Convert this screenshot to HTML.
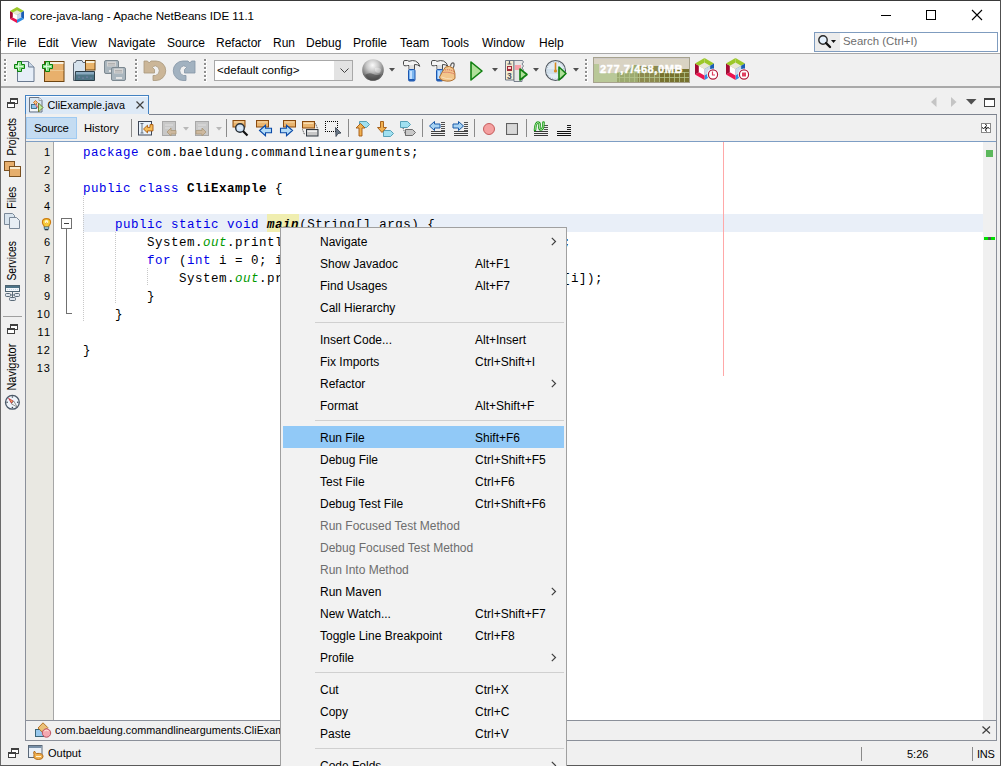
<!DOCTYPE html>
<html><head><meta charset="utf-8">
<style>
*{margin:0;padding:0;box-sizing:border-box}
html,body{width:1001px;height:766px;overflow:hidden;background:#f0f0f0;font-family:"Liberation Sans",sans-serif;font-size:12px;color:#000;position:relative}
.a{position:absolute}
.t{position:absolute;white-space:nowrap;line-height:14px;font-size:12px}
.c{position:absolute;white-space:pre;font-family:"Liberation Mono",monospace;font-size:12.5px;letter-spacing:0.5px;line-height:18px;color:#000}
.k{color:#0000e6}
.o{color:#009900;font-style:italic}
.s{color:#ce7b00}
svg{position:absolute;overflow:visible}
</style></head><body>

<div class="a" style="left:0;top:0;width:1001px;height:53px;background:#fff"></div>
<div class="a" style="left:0;top:53px;width:1001px;height:1px;background:#a8a8a8"></div>
<div class="a" style="left:0;top:86px;width:1001px;height:2px;background:#a9a9a9"></div>
<svg style="left:10px;top:7px" width="14" height="16"><polygon points="7.0,8.0 7.0,0 14,4.0" fill="#9cc82a"/><polygon points="7.0,8.0 14,4.0 14,12.0" fill="#1a5cb4"/><polygon points="7.0,8.0 14,12.0 7.0,16" fill="#2c8ce4"/><polygon points="7.0,8.0 7.0,16 0,12.0" fill="#ec1450"/><polygon points="7.0,8.0 0,12.0 0,4.0" fill="#a40a34"/><polygon points="7.0,8.0 0,4.0 7.0,0" fill="#9cc82a"/><polygon points="2.80,5.60 7.00,3.20 11.20,5.60 7.00,8.00" fill="#e8e8d6"/><polygon points="2.80,5.60 7.00,8.00 7.00,12.80 2.80,10.40" fill="#ffffff"/><polygon points="7.00,8.00 11.20,5.60 11.20,10.40 7.00,12.80" fill="#c9d9e9"/></svg>
<div class="t" style="left:30px;top:9.17px;font-size:11.6px;">core-java-lang - Apache NetBeans IDE 11.1</div>
<div class="a" style="left:881px;top:15px;width:10px;height:1px;background:#000"></div>
<div class="a" style="left:926px;top:10px;width:10px;height:10px;border:1px solid #000"></div>
<svg style="left:972px;top:10px" width="10" height="10"><path d="M0,0L10,10M10,0L0,10" stroke="#000" stroke-width="1.1"/></svg>
<div class="t" style="left:7px;top:36.03px;font-size:12px;">File</div>
<div class="t" style="left:38px;top:36.03px;font-size:12px;">Edit</div>
<div class="t" style="left:71px;top:36.03px;font-size:12px;">View</div>
<div class="t" style="left:108px;top:36.03px;font-size:12px;">Navigate</div>
<div class="t" style="left:167px;top:36.03px;font-size:12px;">Source</div>
<div class="t" style="left:216px;top:36.03px;font-size:12px;">Refactor</div>
<div class="t" style="left:273px;top:36.03px;font-size:12px;">Run</div>
<div class="t" style="left:306px;top:36.03px;font-size:12px;">Debug</div>
<div class="t" style="left:353px;top:36.03px;font-size:12px;">Profile</div>
<div class="t" style="left:400px;top:36.03px;font-size:12px;">Team</div>
<div class="t" style="left:441px;top:36.03px;font-size:12px;">Tools</div>
<div class="t" style="left:482px;top:36.03px;font-size:12px;">Window</div>
<div class="t" style="left:539px;top:36.03px;font-size:12px;">Help</div>
<div class="a" style="left:814px;top:32px;width:184px;height:20px;border:1px solid #7f9cbf;background:#fff"></div>
<div class="a" style="left:815px;top:33px;width:25px;height:18px;background:#ececec"></div>
<svg style="left:818px;top:35px" width="20" height="15"><circle cx="5" cy="5" r="4.2" fill="#e4f0fc" stroke="#2a2a2a" stroke-width="1.4"/><path d="M8,8L12,12" stroke="#111" stroke-width="2.4" stroke-linecap="round"/><path d="M13,5h5l-2.5,3z" fill="#111"/></svg>
<div class="t" style="left:843px;top:34.23px;font-size:11.4px;color:#6d6d6d">Search (Ctrl+I)</div>
<div class="a" style="left:0;top:0;width:1001px;height:1px;background:#3a3a3a"></div>
<div class="a" style="left:0;top:0;width:1px;height:766px;background:#6a6a6a"></div>
<div class="a" style="left:1000px;top:0;width:1px;height:766px;background:#505050"></div>
<div class="a" style="left:0;top:0;width:1px;height:41px;background:#383838"></div>
<div class="a" style="left:0;top:765px;width:1001px;height:1px;background:#5a5a5a"></div>
<div class="a" style="left:4px;top:59px;width:2px;height:2px;background:#8e8e8e;border-right:1px solid #fff;border-bottom:1px solid #fff;box-sizing:content-box;width:2px;height:2px"></div><div class="a" style="left:4px;top:63px;width:2px;height:2px;background:#8e8e8e;border-right:1px solid #fff;border-bottom:1px solid #fff;box-sizing:content-box;width:2px;height:2px"></div><div class="a" style="left:4px;top:67px;width:2px;height:2px;background:#8e8e8e;border-right:1px solid #fff;border-bottom:1px solid #fff;box-sizing:content-box;width:2px;height:2px"></div><div class="a" style="left:4px;top:71px;width:2px;height:2px;background:#8e8e8e;border-right:1px solid #fff;border-bottom:1px solid #fff;box-sizing:content-box;width:2px;height:2px"></div><div class="a" style="left:4px;top:75px;width:2px;height:2px;background:#8e8e8e;border-right:1px solid #fff;border-bottom:1px solid #fff;box-sizing:content-box;width:2px;height:2px"></div><div class="a" style="left:4px;top:79px;width:2px;height:2px;background:#8e8e8e;border-right:1px solid #fff;border-bottom:1px solid #fff;box-sizing:content-box;width:2px;height:2px"></div>
<div class="a" style="left:135px;top:59px;width:2px;height:2px;background:#8e8e8e;border-right:1px solid #fff;border-bottom:1px solid #fff;box-sizing:content-box;width:2px;height:2px"></div><div class="a" style="left:135px;top:63px;width:2px;height:2px;background:#8e8e8e;border-right:1px solid #fff;border-bottom:1px solid #fff;box-sizing:content-box;width:2px;height:2px"></div><div class="a" style="left:135px;top:67px;width:2px;height:2px;background:#8e8e8e;border-right:1px solid #fff;border-bottom:1px solid #fff;box-sizing:content-box;width:2px;height:2px"></div><div class="a" style="left:135px;top:71px;width:2px;height:2px;background:#8e8e8e;border-right:1px solid #fff;border-bottom:1px solid #fff;box-sizing:content-box;width:2px;height:2px"></div><div class="a" style="left:135px;top:75px;width:2px;height:2px;background:#8e8e8e;border-right:1px solid #fff;border-bottom:1px solid #fff;box-sizing:content-box;width:2px;height:2px"></div><div class="a" style="left:135px;top:79px;width:2px;height:2px;background:#8e8e8e;border-right:1px solid #fff;border-bottom:1px solid #fff;box-sizing:content-box;width:2px;height:2px"></div>
<div class="a" style="left:204px;top:59px;width:2px;height:2px;background:#8e8e8e;border-right:1px solid #fff;border-bottom:1px solid #fff;box-sizing:content-box;width:2px;height:2px"></div><div class="a" style="left:204px;top:63px;width:2px;height:2px;background:#8e8e8e;border-right:1px solid #fff;border-bottom:1px solid #fff;box-sizing:content-box;width:2px;height:2px"></div><div class="a" style="left:204px;top:67px;width:2px;height:2px;background:#8e8e8e;border-right:1px solid #fff;border-bottom:1px solid #fff;box-sizing:content-box;width:2px;height:2px"></div><div class="a" style="left:204px;top:71px;width:2px;height:2px;background:#8e8e8e;border-right:1px solid #fff;border-bottom:1px solid #fff;box-sizing:content-box;width:2px;height:2px"></div><div class="a" style="left:204px;top:75px;width:2px;height:2px;background:#8e8e8e;border-right:1px solid #fff;border-bottom:1px solid #fff;box-sizing:content-box;width:2px;height:2px"></div><div class="a" style="left:204px;top:79px;width:2px;height:2px;background:#8e8e8e;border-right:1px solid #fff;border-bottom:1px solid #fff;box-sizing:content-box;width:2px;height:2px"></div>
<div class="a" style="left:585px;top:59px;width:2px;height:2px;background:#8e8e8e;border-right:1px solid #fff;border-bottom:1px solid #fff;box-sizing:content-box;width:2px;height:2px"></div><div class="a" style="left:585px;top:63px;width:2px;height:2px;background:#8e8e8e;border-right:1px solid #fff;border-bottom:1px solid #fff;box-sizing:content-box;width:2px;height:2px"></div><div class="a" style="left:585px;top:67px;width:2px;height:2px;background:#8e8e8e;border-right:1px solid #fff;border-bottom:1px solid #fff;box-sizing:content-box;width:2px;height:2px"></div><div class="a" style="left:585px;top:71px;width:2px;height:2px;background:#8e8e8e;border-right:1px solid #fff;border-bottom:1px solid #fff;box-sizing:content-box;width:2px;height:2px"></div><div class="a" style="left:585px;top:75px;width:2px;height:2px;background:#8e8e8e;border-right:1px solid #fff;border-bottom:1px solid #fff;box-sizing:content-box;width:2px;height:2px"></div><div class="a" style="left:585px;top:79px;width:2px;height:2px;background:#8e8e8e;border-right:1px solid #fff;border-bottom:1px solid #fff;box-sizing:content-box;width:2px;height:2px"></div>
<svg style="left:17px;top:61px" width="18" height="21"><path d="M0.5,0.5h11l5.5,5.5v14.5h-16.5z" fill="#e6eef8" stroke="#6b7a90"/><path d="M11.5,0.5v5.5h5.5" fill="#cbd8e6" stroke="#6b7a90"/></svg>
<svg style="left:14px;top:61px" width="11" height="11"><path d="M3.5,0.5h4v3h3v4h-3v3h-4v-3h-3v-4h3z" fill="#8ee08e" stroke="#0b800b" stroke-width="1"/><path d="M4.5,2v7M2,5.5h7" stroke="#d8f8d8" stroke-width="1"/></svg>
<svg style="left:44px;top:61px" width="21" height="21"><rect x="0.5" y="0.5" width="19.5" height="20" fill="#e8b06c" stroke="#6e4410"/><rect x="1" y="1" width="18.5" height="2" fill="#f8f0e0"/><rect x="1" y="9" width="18.5" height="1" fill="#f0d8a8" opacity="0.6"/></svg>
<svg style="left:42px;top:61px" width="11" height="11"><path d="M3.5,0.5h4v3h3v4h-3v3h-4v-3h-3v-4h3z" fill="#8ee08e" stroke="#0b800b" stroke-width="1"/><path d="M4.5,2v7M2,5.5h7" stroke="#d8f8d8" stroke-width="1"/></svg>
<svg style="left:73px;top:60px" width="23" height="22"><path d="M0.5,3.5 Q0.5,2.5 1.5,2.5 H2.5 L3.5,0.5 H9 L10,2.5 H12.5 V20.5 H0.5 Z" fill="#d6e2ec" stroke="#5a6470"/><rect x="12.5" y="0.5" width="9.5" height="9.5" fill="#eab46a" stroke="#6e4410"/><rect x="13" y="1" width="8.5" height="2" fill="#f8f0d8"/><path d="M12.5,10.5v1" stroke="#404040"/><path d="M2.5,11.5 H21.5 V20.5 H2 Z" fill="#4f7686" stroke="#2e3e48"/><rect x="3" y="12" width="18" height="2.5" fill="#8aaac0"/><g fill="#a890d0"><circle cx="6" cy="17" r="0.6"/><circle cx="10" cy="18" r="0.6"/><circle cx="14" cy="17" r="0.6"/><circle cx="18" cy="18" r="0.6"/></g></svg>
<svg style="left:104px;top:60px" width="23" height="22"><rect x="0.5" y="0.5" width="14" height="13" rx="1.5" fill="#aab6be" stroke="#7c8890"/><rect x="3" y="1.5" width="9" height="5" fill="#d4d4d4"/><path d="M4,3.5h7M4,5h7" stroke="#a8a8a8" stroke-width="0.8"/><rect x="5" y="10" width="6" height="2" fill="#e4e4e4"/><rect x="7.5" y="7.5" width="14" height="13" rx="1.5" fill="#aab6be" stroke="#7c8890"/><rect x="10" y="8.5" width="9" height="5" fill="#d4d4d4"/><path d="M11,10.5h7M11,12h7" stroke="#a8a8a8" stroke-width="0.8"/><rect x="12" y="17" width="6" height="2" fill="#e4e4e4"/></svg>
<svg style="left:142px;top:58px" width="25" height="25"><path d="M2,3 L5.5,3 L7,5 L9,3 L14,3 A9.7,9.7 0 0 1 14,22.5 L11,22.5 L11,17.5 L13.5,17.5 A5,5 0 0 0 13.5,7.8 Q11.5,8 10.5,9.5 L12.5,11.5 L12.5,15 L2,15 Z" fill="#cbb698" stroke="#a8987c" stroke-width="0.8"/></svg>
<svg style="left:174px;top:58px" width="25" height="25"><g transform="translate(23,0) scale(-1,1)"><path d="M2,3 L5.5,3 L7,5 L9,3 L14,3 A9.7,9.7 0 0 1 14,22.5 L11,22.5 L11,17.5 L13.5,17.5 A5,5 0 0 0 13.5,7.8 Q11.5,8 10.5,9.5 L12.5,11.5 L12.5,15 L2,15 Z" fill="#a2b2c0" stroke="#8494a4" stroke-width="0.8"/></g></svg>
<div class="a" style="left:214px;top:60px;width:139px;height:21px;border:1px solid #a8a8a8;background:#fff"></div>
<div class="a" style="left:334px;top:61px;width:18px;height:19px;background:#e3e3e3"></div>
<svg style="left:340px;top:68px" width="9" height="5"><path d="M0.5,0.5l4,4l4,-4" fill="none" stroke="#404040" stroke-width="1"/></svg>
<div class="t" style="left:217px;top:63.17px;font-size:11.6px;">&lt;default config&gt;</div>
<svg style="left:362px;top:59px" width="23" height="23"><defs><radialGradient id="gl" cx="0.48" cy="0.28" r="0.8"><stop offset="0" stop-color="#fafafa"/><stop offset="0.35" stop-color="#c8c8c8"/><stop offset="0.7" stop-color="#7a7a7a"/><stop offset="1" stop-color="#3a3a3a"/></radialGradient></defs><circle cx="11" cy="11" r="10.8" fill="url(#gl)"/><path d="M3,16q4,-3 8,-1q4,2 8,0q-2,6 -8,6.5q-5,0 -8,-5.5z" fill="#404040" opacity="0.55"/><path d="M13,9q3,-1 6,1q0,3 -2,4q-3,0 -4,-2z" fill="#fff" opacity="0.35"/></svg>
<svg style="left:389px;top:68px" width="6" height="4"><path d="M0,0h6l-3,3.5z" fill="#505050"/></svg>
<svg style="left:403px;top:60px" width="19" height="22"><path d="M0.5,1.8 Q0.5,0.5 2,0.5 H4.5 L6,1.3 Q9.5,0 12.5,1 Q16,2.5 16.8,6.3 Q14.5,4.2 11.5,4.5 V9.5 H6 V5.5 L4.5,5.5 Q3.5,5.8 2,5.8 Q0.5,5.8 0.5,4.5 Z" fill="#f4f4f4" stroke="#4a4a4a" stroke-width="1"/><rect x="6.5" y="5" width="4.5" height="4.5" fill="#e0e0e0"/><rect x="5.5" y="9.5" width="6.5" height="11.5" rx="1.2" fill="#7cb6f0" stroke="#1c56b0" stroke-width="1"/><rect x="7" y="11" width="2" height="8" fill="#c4e0ff"/><rect x="6" y="19" width="5.5" height="1.8" fill="#1c56b0"/></svg>
<svg style="left:431px;top:60px" width="25" height="23"><path d="M0.5,1.8 Q0.5,0.5 2,0.5 H4.5 L6,1.3 Q9.5,0 12.5,1 Q16,2.5 16.8,6.3 Q14.5,4.2 11.5,4.5 V9.5 H6 V5.5 L4.5,5.5 Q3.5,5.8 2,5.8 Q0.5,5.8 0.5,4.5 Z" fill="#f4f4f4" stroke="#4a4a4a" stroke-width="1"/><rect x="6.5" y="5" width="4.5" height="4.5" fill="#e0e0e0"/><rect x="5.5" y="9.5" width="6.5" height="11.5" rx="1.2" fill="#7cb6f0" stroke="#1c56b0" stroke-width="1"/><rect x="7" y="11" width="2" height="8" fill="#c4e0ff"/><rect x="6" y="19" width="5.5" height="1.8" fill="#1c56b0"/><path d="M19.5,6.5 Q20,2.5 22.5,3 Q24,4.5 22,8" fill="none" stroke="#5a5a5a" stroke-width="1.2"/><path d="M14.5,7 Q18.5,5 22.5,8.5 Q24.5,13 24,18.5 Q20,22.5 12,20.5 Q8.5,19.5 8.5,17 Q11,12 14.5,7 Z" fill="#f2c68c" stroke="#b07030" stroke-width="1"/><path d="M14,10 Q18.5,9 23,11.5 M12.5,12.5 Q17.5,11.5 23.5,14" stroke="#d05858" stroke-width="0.9" stroke-dasharray="1.2 0.8" fill="none"/><path d="M10.5,17 Q15,19 21,19" stroke="#f8e0b8" stroke-width="1" fill="none"/></svg>
<svg style="left:470px;top:61px" width="13" height="20"><path d="M1,1L12,10.0L1,19z" fill="#b0e09a" stroke="#108010" stroke-width="1.6" stroke-linejoin="round"/></svg>
<svg style="left:492px;top:68px" width="6" height="4"><path d="M0,0h6l-3,3.5z" fill="#505050"/></svg>
<svg style="left:505px;top:60px" width="20" height="21"><path d="M0.5,0.5h8.5v19.5h-8.5z" fill="#f4ecd0" stroke="#6a7482"/><path d="M9,0.5h8.5l1,1.5l-1.5,2l1.5,2l-1.5,2l1.5,2l-1.5,2l1.5,2l-1.5,2l1.5,2l-1.5,2v1.5h-8z" fill="#e6e6e6" stroke="#6a7482" stroke-width="0.9"/><path d="M4.5,1v3M2.5,4h4" stroke="#505a68" stroke-width="1.2"/><rect x="2" y="6" width="5" height="5" fill="#a02838"/><rect x="3" y="7" width="3" height="2" fill="#fcd0d0"/><text x="2" y="18.5" font-size="8.5" font-weight="bold" font-family="Liberation Sans" fill="#4a5060">3</text><rect x="10" y="5" width="6" height="5" fill="#f8a0a8"/></svg>
<svg style="left:519px;top:68px" width="9" height="13"><path d="M1,1L8,6.5L1,12z" fill="#b0e09a" stroke="#108010" stroke-width="1.6" stroke-linejoin="round"/></svg>
<svg style="left:533px;top:68px" width="6" height="4"><path d="M0,0h6l-3,3.5z" fill="#505050"/></svg>
<svg style="left:545px;top:60px" width="22" height="22"><circle cx="10.5" cy="10.5" r="10" fill="#e2ecf4" stroke="#505860" stroke-width="1.1"/><circle cx="10.5" cy="10.5" r="8.5" fill="none" stroke="#8aa0b4" stroke-width="1" stroke-dasharray="0.6 2.07"/><rect x="1.5" y="9" width="18" height="5" fill="#c8d8e4" opacity="0.6"/><path d="M10.5,2.5v8" stroke="#d88a20" stroke-width="1.6"/><circle cx="10.5" cy="11" r="1.6" fill="#d88a20"/></svg>
<svg style="left:558px;top:66px" width="9" height="15"><path d="M1,1L8,7.5L1,14z" fill="#b0e09a" stroke="#108010" stroke-width="1.6" stroke-linejoin="round"/></svg>
<svg style="left:573px;top:68px" width="6" height="4"><path d="M0,0h6l-3,3.5z" fill="#505050"/></svg>
<svg style="left:593px;top:57px" width="97" height="26"><rect x="0.5" y="0.5" width="96" height="25" fill="#d9d3c3" stroke="#a6a28e"/><rect x="1" y="1" width="95" height="1" fill="#c8c4c8" opacity="0.6"/><path d="M1,7H6V16H24V25H1Z" fill="#b9c898"/><path d="M24,16H33L40,8H46V25H24Z" fill="#9caa70"/><path d="M45,9H67V25H45Z" fill="#8c8a4e"/><path d="M67,12H96V25H67Z" fill="#77722f"/><rect x="26" y="15" width="1" height="10" fill="#b4c48c" opacity="0.8"/><rect x="31" y="15" width="1" height="10" fill="#b4c48c" opacity="0.8"/><rect x="36" y="15" width="1" height="10" fill="#b4c48c" opacity="0.8"/><rect x="41" y="15" width="1" height="10" fill="#b4c48c" opacity="0.8"/><rect x="46" y="15" width="1" height="10" fill="#b4c48c" opacity="0.8"/><rect x="51" y="15" width="1" height="10" fill="#b4c48c" opacity="0.8"/><rect x="56" y="15" width="1" height="10" fill="#b4c48c" opacity="0.8"/><rect x="61" y="15" width="1" height="10" fill="#b4c48c" opacity="0.8"/><rect x="66" y="15" width="1" height="10" fill="#b4c48c" opacity="0.8"/><rect x="71" y="15" width="1" height="10" fill="#b4c48c" opacity="0.8"/><rect x="76" y="15" width="1" height="10" fill="#b4c48c" opacity="0.8"/><rect x="81" y="15" width="1" height="10" fill="#b4c48c" opacity="0.8"/><rect x="86" y="15" width="1" height="10" fill="#b4c48c" opacity="0.8"/><rect x="91" y="15" width="1" height="10" fill="#b4c48c" opacity="0.8"/><rect x="24" y="15" width="72" height="1" fill="#b4c48c" opacity="0.8"/><rect x="24" y="20" width="72" height="1" fill="#b4c48c" opacity="0.8"/></svg>
<div class="t" style="left:600px;top:62.36px;font-size:11px;color:#fff;font-weight:bold;letter-spacing:0.6px;-webkit-text-stroke:0.4px #fff">277,7/468,0MB</div>
<svg style="left:695px;top:58px" width="26" height="24"><polygon points="9.5,11.0 9.5,0 19,5.5" fill="#9cc82a"/><polygon points="9.5,11.0 19,5.5 19,16.5" fill="#1a5cb4"/><polygon points="9.5,11.0 19,16.5 9.5,22" fill="#2c8ce4"/><polygon points="9.5,11.0 9.5,22 0,16.5" fill="#ec1450"/><polygon points="9.5,11.0 0,16.5 0,5.5" fill="#a40a34"/><polygon points="9.5,11.0 0,5.5 9.5,0" fill="#9cc82a"/><polygon points="3.80,7.70 9.50,4.40 15.20,7.70 9.50,11.00" fill="#e8e8d6"/><polygon points="3.80,7.70 9.50,11.00 9.50,17.60 3.80,14.30" fill="#ffffff"/><polygon points="9.50,11.00 15.20,7.70 15.20,14.30 9.50,17.60" fill="#c9d9e9"/><circle cx="18" cy="16.5" r="6" fill="#fff"/><circle cx="18" cy="16.5" r="4.6" fill="#fff" stroke="#b01838" stroke-width="1.2"/><path d="M17.5,13.5v3.5h2.5" stroke="#e04060" stroke-width="1.2" fill="none"/></svg>
<svg style="left:726px;top:58px" width="26" height="24"><polygon points="9.5,11.0 9.5,0 19,5.5" fill="#9cc82a"/><polygon points="9.5,11.0 19,5.5 19,16.5" fill="#1a5cb4"/><polygon points="9.5,11.0 19,16.5 9.5,22" fill="#2c8ce4"/><polygon points="9.5,11.0 9.5,22 0,16.5" fill="#ec1450"/><polygon points="9.5,11.0 0,16.5 0,5.5" fill="#a40a34"/><polygon points="9.5,11.0 0,5.5 9.5,0" fill="#9cc82a"/><polygon points="3.80,7.70 9.50,4.40 15.20,7.70 9.50,11.00" fill="#e8e8d6"/><polygon points="3.80,7.70 9.50,11.00 9.50,17.60 3.80,14.30" fill="#ffffff"/><polygon points="9.50,11.00 15.20,7.70 15.20,14.30 9.50,17.60" fill="#c9d9e9"/><circle cx="18" cy="16.5" r="6" fill="#fff"/><circle cx="18" cy="16.5" r="4.6" fill="#fff" stroke="#b01838" stroke-width="1.2"/><rect x="16" y="14.5" width="4" height="4" fill="#e04060"/></svg>
<svg style="left:7px;top:98px" width="11" height="11"><rect x="3.5" y="0.5" width="7" height="5" fill="#fff" stroke="#404040"/><rect x="3.5" y="0.5" width="7" height="1.5" fill="#404040"/><rect x="0.5" y="4.5" width="7" height="5" fill="#fff" stroke="#404040"/><rect x="0.5" y="4.5" width="7" height="1.5" fill="#404040"/></svg>
<svg style="left:0;top:0" width="25" height="420"><text x="16.4" y="155.5" transform="rotate(-90 16.4 155.5)" font-family="Liberation Sans" font-size="12" textLength="37.5" lengthAdjust="spacingAndGlyphs" fill="#000">Projects</text></svg>
<svg style="left:0;top:0" width="25" height="420"><text x="16.4" y="208.7" transform="rotate(-90 16.4 208.7)" font-family="Liberation Sans" font-size="12" textLength="22" lengthAdjust="spacingAndGlyphs" fill="#000">Files</text></svg>
<svg style="left:0;top:0" width="25" height="420"><text x="16.4" y="280.6" transform="rotate(-90 16.4 280.6)" font-family="Liberation Sans" font-size="12" textLength="39.6" lengthAdjust="spacingAndGlyphs" fill="#000">Services</text></svg>
<svg style="left:0;top:0" width="25" height="420"><text x="16.2" y="390.6" transform="rotate(-90 16.2 390.6)" font-family="Liberation Sans" font-size="12" textLength="47" lengthAdjust="spacingAndGlyphs" fill="#000">Navigator</text></svg>
<svg style="left:4px;top:161px" width="17" height="16"><rect x="0.5" y="0.5" width="10" height="9" fill="#e6ae6c" stroke="#7a5020"/><rect x="5.5" y="5.5" width="11" height="10" fill="#e6ae6c" stroke="#7a5020"/><rect x="6" y="6" width="10" height="2" fill="#f8ecd0"/></svg>
<svg style="left:4px;top:213px" width="17" height="17"><path d="M0.5,0.5h8l2,2v9h-10z" fill="#d8e4ee" stroke="#7a8898"/><path d="M5.5,4.5h7l3,3v8h-10z" fill="#e8eef4" stroke="#7a8898"/></svg>
<svg style="left:5px;top:285px" width="16" height="16"><rect x="0.5" y="0.5" width="14" height="6" fill="#f4f8fc" stroke="#4e6472"/><rect x="1" y="1" width="13" height="2" fill="#4e7488"/><path d="M2,4.5h11" stroke="#c8d8e8" stroke-dasharray="1 1"/><path d="M7.5,7v6M5,10h5" stroke="#5a6a78"/><rect x="0.5" y="8.5" width="5" height="3" rx="1" fill="#dfe6ee" stroke="#5a6a78"/><rect x="9.5" y="8.5" width="5" height="3" rx="1" fill="#dfe6ee" stroke="#5a6a78"/><rect x="4.5" y="12.5" width="6" height="3" rx="1" fill="#dfe6ee" stroke="#5a6a78"/></svg>
<div class="a" style="left:3px;top:316px;width:19px;height:1px;background:#a0a0a0"></div>
<svg style="left:7px;top:324px" width="11" height="11"><rect x="3.5" y="0.5" width="7" height="5" fill="#fff" stroke="#404040"/><rect x="3.5" y="0.5" width="7" height="1.5" fill="#404040"/><rect x="0.5" y="4.5" width="7" height="5" fill="#fff" stroke="#404040"/><rect x="0.5" y="4.5" width="7" height="1.5" fill="#404040"/></svg>
<svg style="left:4px;top:394px" width="17" height="17"><circle cx="8.4" cy="8.3" r="6.9" fill="#eef4fa" stroke="#4a5868" stroke-width="1.3"/><g fill="#3a4450"><circle cx="8.4" cy="3" r="0.8"/><circle cx="8.4" cy="13.6" r="0.8"/><circle cx="3.1" cy="8.3" r="0.8"/><circle cx="13.7" cy="8.3" r="0.8"/></g><path d="M3.8,3.6 L9.8,7.1 L7.3,9.8 Z" fill="#c42838"/><path d="M5.5,5 L8.8,7.3 L7.5,8.6 Z" fill="#e8b060"/><path d="M9.8,7.1 L13.2,13 L7.3,9.8 Z" fill="#f4f4f4" stroke="#6a6a6a" stroke-width="0.7"/></svg>
<div class="a" style="left:25px;top:95px;width:124px;height:20px;border:1px solid #4382c2;border-bottom:none;background:#dde9f6"></div>
<div class="a" style="left:26px;top:96px;width:122px;height:1px;background:#f8fbff"></div>
<svg style="left:29px;top:97px" width="16" height="16"><path d="M0.5,0.5h9.5l3,3v11.5h-12.5z" fill="#d8e6f2" stroke="#6b7482"/><path d="M10,0.5v3h3" fill="#f0f4f8" stroke="#8a94a0" stroke-width="0.8"/><rect x="1" y="11" width="11" height="3" fill="#f4f6f8"/><rect x="2.5" y="7.5" width="5" height="4" fill="#8ec4ee" stroke="#3a6a80" stroke-width="0.9"/><path d="M4.5,5.5l2,-2l2,2l-2,2z" fill="#f4c080" stroke="#c06010" stroke-width="0.8"/><path d="M6.5,7.5l3,3.5" stroke="#e88080" stroke-width="1.4"/><path d="M9.5,6l4.5,4.5l-4.5,4.5z" fill="#b8eea0" stroke="#6a7020" stroke-width="0.9"/></svg>
<div class="t" style="left:47.5px;top:98.43px;font-size:10.8px;">CliExample.java</div>
<svg style="left:136px;top:101px" width="8" height="8"><path d="M0.5,0.5L7.5,7.5M7.5,0.5L0.5,7.5" stroke="#404040" stroke-width="1.2"/></svg>
<svg style="left:931px;top:97px" width="6" height="10"><path d="M5.5,0v10L0,5z" fill="#c4c4c4"/></svg>
<svg style="left:951px;top:97px" width="6" height="10"><path d="M0,0v10L5.5,5z" fill="#c4c4c4"/></svg>
<svg style="left:966px;top:99px" width="11" height="6"><path d="M0,0h10.5l-5.25,5.5z" fill="#505050"/></svg>
<svg style="left:984px;top:98px" width="11" height="9"><rect x="0.5" y="0.5" width="10" height="8" fill="#fff" stroke="#404040"/><rect x="0" y="0" width="11" height="2" fill="#404040"/></svg>
<div class="a" style="left:25px;top:114px;width:972px;height:627px;border:1px solid #8b909a;border-top:none;background:#f0f0f0"></div>
<div class="a" style="left:149px;top:114px;width:848px;height:1px;background:#7c828e"></div>
<div class="a" style="left:26px;top:117px;width:51px;height:22px;border:1px solid #9fcaf2;background:#c4dcf2"></div>
<div class="t" style="left:34px;top:121.23px;font-size:11.4px;letter-spacing:-0.25px">Source</div>
<div class="t" style="left:84px;top:121.30px;font-size:11.2px;">History</div>
<div class="a" style="left:131px;top:119px;width:1px;height:18px;background:#8a8a8a"></div>
<div class="a" style="left:226px;top:119px;width:1px;height:18px;background:#8a8a8a"></div>
<div class="a" style="left:348px;top:119px;width:1px;height:18px;background:#8a8a8a"></div>
<div class="a" style="left:422px;top:119px;width:1px;height:18px;background:#8a8a8a"></div>
<div class="a" style="left:474px;top:119px;width:1px;height:18px;background:#8a8a8a"></div>
<div class="a" style="left:526px;top:119px;width:1px;height:18px;background:#8a8a8a"></div>
<div class="a" style="left:26px;top:141px;width:970px;height:1px;background:#7e9ec4"></div>
<div class="a" style="left:26px;top:142px;width:27px;height:578px;background:#e9e8e2"></div>
<div class="a" style="left:53px;top:142px;width:1px;height:578px;background:#a6a6a6"></div>
<div class="a" style="left:54px;top:142px;width:929px;height:578px;background:#fff"></div>
<div class="a" style="left:983px;top:142px;width:13px;height:578px;background:#f0f0f0"></div>
<div class="a" style="left:986px;top:150px;width:7px;height:7px;background:#5cb85c"></div>
<div class="a" style="left:984px;top:237px;width:11px;height:3px;background:#00e000"></div>
<div class="a" style="left:988px;top:237px;width:3px;height:3px;background:#555"></div>
<div class="a" style="left:26px;top:720px;width:970px;height:1px;background:#8b909a"></div>
<svg style="left:35px;top:722px" width="17" height="16"><rect x="0.5" y="7.5" width="8" height="7" fill="#98c8ec" stroke="#3a6478"/><path d="M3,6l5,-5.2l4.8,4.8l-5,5z" fill="#eac078" stroke="#b06a18" stroke-width="0.9"/><circle cx="11.5" cy="11" r="4.2" fill="#f4a8b0" stroke="#b84858" stroke-width="0.9"/><path d="M9.5,9q2,-1.5 4,0" stroke="#fff0e0" stroke-width="0.9" fill="none"/></svg>
<div class="t" style="left:55px;top:723.43px;font-size:10.8px;">com.baeldung.commandlinearguments.CliExample</div>
<svg style="left:982px;top:726px" width="9" height="8"><path d="M0.5,0.5L8,7.5M8,0.5L0.5,7.5" stroke="#404040" stroke-width="1.2"/></svg>
<svg style="left:8px;top:748px" width="11" height="11"><rect x="3.5" y="0.5" width="7" height="5" fill="#fff" stroke="#404040"/><rect x="3.5" y="0.5" width="7" height="1.5" fill="#404040"/><rect x="0.5" y="4.5" width="7" height="5" fill="#fff" stroke="#404040"/><rect x="0.5" y="4.5" width="7" height="1.5" fill="#404040"/></svg>
<svg style="left:28px;top:745px" width="17" height="17"><rect x="0.5" y="0.5" width="13.5" height="12" fill="#e8eff8" stroke="#5a6878"/><rect x="1" y="1" width="12.5" height="2" fill="#7890a8"/><path d="M6,9.5q-1,-2.5 0.5,-3.5q0.5,2 2,2.5q3,-0.5 5,0.5q2,1 1.5,3q-0.5,2.5 -4.5,2.5q-4,0 -4.5,-2q-0.2,-1.5 0,-3z" fill="#f0b050" stroke="#a86010" stroke-width="0.9"/><path d="M8,11.5h5" stroke="#fff4d8" stroke-width="1"/></svg>
<div class="t" style="left:48px;top:746.36px;font-size:11px;">Output</div>
<div class="a" style="left:861px;top:747px;width:1px;height:14px;background:#8a8a8a"></div>
<div class="t" style="left:907px;top:747.36px;font-size:11px;">5:26</div>
<div class="a" style="left:972px;top:747px;width:1px;height:14px;background:#8a8a8a"></div>
<div class="t" style="left:977px;top:747.36px;font-size:11px;letter-spacing:-0.3px">INS</div>
<div class="a" style="left:83px;top:214px;width:900px;height:18px;background:#e9eff8"></div>
<div class="a" style="left:267px;top:214px;width:32px;height:18px;background:#f0eeb0"></div>
<div class="a" style="left:723px;top:142px;width:1px;height:234px;background:#ffa8a8"></div>
<div class="a" style="left:83px;top:196px;width:1px;height:126px;background-image:linear-gradient(#c8c8c8 50%,transparent 50%);background-size:1px 2px"></div>
<div class="a" style="left:115px;top:232px;width:1px;height:72px;background-image:linear-gradient(#c8c8c8 50%,transparent 50%);background-size:1px 2px"></div>
<div class="a" style="left:147px;top:268px;width:1px;height:18px;background-image:linear-gradient(#c8c8c8 50%,transparent 50%);background-size:1px 2px"></div>
<div class="c" style="left:83px;top:144px"><span class="k">package</span> com.baeldung.commandlinearguments;</div>
<div class="t" style="left:20px;width:31px;text-align:right;top:144.5px;font-size:11px;letter-spacing:1px">1</div>
<div class="c" style="left:83px;top:162px"></div>
<div class="t" style="left:20px;width:31px;text-align:right;top:162.5px;font-size:11px;letter-spacing:1px">2</div>
<div class="c" style="left:83px;top:180px"><span class="k">public</span> <span class="k">class</span> <b>CliExample</b> {</div>
<div class="t" style="left:20px;width:31px;text-align:right;top:180.5px;font-size:11px;letter-spacing:1px">3</div>
<div class="c" style="left:83px;top:198px"></div>
<div class="t" style="left:20px;width:31px;text-align:right;top:198.5px;font-size:11px;letter-spacing:1px">4</div>
<div class="c" style="left:83px;top:216px">    <span class="k">public</span> <span class="k">static</span> <span class="k">void</span> <b><i>main</i></b>(String[] args) {</div>
<div class="c" style="left:83px;top:234px">        System.<span class="o">out</span>.println(<span class="s">"Argument count: "</span> + args.length);</div>
<div class="t" style="left:20px;width:31px;text-align:right;top:234.5px;font-size:11px;letter-spacing:1px">6</div>
<div class="c" style="left:83px;top:252px">        <span class="k">for</span> (<span class="k">int</span> i = 0; i &lt; args.length; i++) {</div>
<div class="t" style="left:20px;width:31px;text-align:right;top:252.5px;font-size:11px;letter-spacing:1px">7</div>
<div class="c" style="left:83px;top:270px">            System.<span class="o">out</span>.println(<span class="s">"Argument "</span> + i + <span class="s">": "</span> + args[i]);</div>
<div class="t" style="left:20px;width:31px;text-align:right;top:270.5px;font-size:11px;letter-spacing:1px">8</div>
<div class="c" style="left:83px;top:288px">        }</div>
<div class="t" style="left:20px;width:31px;text-align:right;top:288.5px;font-size:11px;letter-spacing:1px">9</div>
<div class="c" style="left:83px;top:306px">    }</div>
<div class="t" style="left:20px;width:31px;text-align:right;top:306.5px;font-size:11px;letter-spacing:1px">10</div>
<div class="c" style="left:83px;top:324px"></div>
<div class="t" style="left:20px;width:31px;text-align:right;top:324.5px;font-size:11px;letter-spacing:1px">11</div>
<div class="c" style="left:83px;top:342px">}</div>
<div class="t" style="left:20px;width:31px;text-align:right;top:342.5px;font-size:11px;letter-spacing:1px">12</div>
<div class="c" style="left:83px;top:360px"></div>
<div class="t" style="left:20px;width:31px;text-align:right;top:360.5px;font-size:11px;letter-spacing:1px">13</div>
<svg style="left:42px;top:218px" width="10" height="13"><path d="M4.5,0.6 Q8.6,0.6 8.6,4.3 Q8.6,6.3 6.8,8.2 V9 H2.2 V8.2 Q0.4,6.3 0.4,4.3 Q0.4,0.6 4.5,0.6 Z" fill="#f6d03a" stroke="#cc7a10" stroke-width="1.1"/><circle cx="4.5" cy="3.8" r="1.8" fill="#fff6c8"/><path d="M3,6.5l1.5,-2l1.5,2" stroke="#f0a020" stroke-width="0.7" fill="none"/><rect x="2.3" y="9" width="4.4" height="2" fill="#e0e8f0" stroke="#2f6f88" stroke-width="0.8"/><rect x="2.8" y="11" width="3.4" height="1.3" fill="#303840"/></svg>
<div class="a" style="left:61px;top:218px;width:11px;height:11px;border:1px solid #707070;background:#fff"></div>
<div class="a" style="left:64px;top:223px;width:5px;height:1px;background:#404040"></div>
<div class="a" style="left:66px;top:229px;width:1px;height:85px;background:#707070"></div>
<div class="a" style="left:66px;top:313px;width:6px;height:1px;background:#707070"></div>
<svg style="left:138px;top:121px" width="17" height="16"><rect x="0.5" y="0.5" width="13" height="13.5" fill="#e8f2fc" stroke="#3e4656"/><path d="M2.5,2.5h3M4,2.5v9.5M2.5,12h3" stroke="#5a6474" stroke-width="0.9" fill="none"/><path d="M5.5,8l4,-3.8v2.2h2.5v-2.8h3v6.3h-5.5v2z" fill="#f6bc58" stroke="#a85a10" stroke-width="0.9"/></svg>
<svg style="left:162px;top:121px" width="17" height="16"><rect x="0.5" y="0.5" width="13" height="14" fill="#c8c8c8" stroke="#a8a8a8"/><path d="M3,4h8M3,7h5" stroke="#e0e0e0"/><path d="M5,11l4,-4v2.5h5v3.5h-5v2z" fill="#cdb89e" stroke="#a89878" stroke-width="0.8"/></svg>
<svg style="left:183px;top:127px" width="6" height="4"><path d="M0,0h6l-3,3.5z" fill="#b8b8b8"/></svg>
<svg style="left:195px;top:121px" width="17" height="16"><rect x="0.5" y="0.5" width="13" height="14" fill="#c8c8c8" stroke="#a8a8a8"/><path d="M3,4h8M3,7h5" stroke="#e0e0e0"/><path d="M11,11l-4,-4v2.5h-6v3.5h6v2z" fill="#cdb89e" stroke="#a89878" stroke-width="0.8"/></svg>
<svg style="left:216px;top:127px" width="6" height="4"><path d="M0,0h6l-3,3.5z" fill="#b8b8b8"/></svg>
<svg style="left:232px;top:120px" width="18" height="18"><rect x="1.0" y="0.5" width="12" height="6.5" fill="#eab46e" stroke="#8a4a0e"/><rect x="2.0" y="1.5" width="10" height="1" fill="#f8dcae"/><circle cx="8" cy="8" r="4.3" fill="#cfe2f6" stroke="#283038" stroke-width="1.4"/><path d="M5.5,8h5" stroke="#e8f2fc" stroke-width="1"/><path d="M11,11l4.5,4.5" stroke="#101010" stroke-width="2.2"/></svg>
<svg style="left:256px;top:120px" width="18" height="18"><rect x="0.5" y="0.5" width="12" height="6.5" fill="#eab46e" stroke="#8a4a0e"/><rect x="1.5" y="1.5" width="10" height="1" fill="#f8dcae"/><path d="M3.5,10.5l6,-5.2v3h6v4.4h-6v3z" fill="#b4dcf8" stroke="#0a4aa8" stroke-width="1.1"/></svg>
<svg style="left:279px;top:120px" width="18" height="18"><rect x="4.5" y="0.5" width="12" height="6.5" fill="#eab46e" stroke="#8a4a0e"/><rect x="5.5" y="1.5" width="10" height="1" fill="#f8dcae"/><path d="M13.5,10.5l-6,-5.2v3h-6v4.4h6v3z" fill="#b4dcf8" stroke="#0a4aa8" stroke-width="1.1"/></svg>
<svg style="left:302px;top:121px" width="18" height="17"><rect x="0.5" y="0.5" width="12" height="6.5" fill="#eab46e" stroke="#8a4a0e"/><rect x="1.5" y="1.5" width="10" height="1.5" fill="#f8dcae"/><path d="M13.5,2.5l2,5M0.5,8.5l2,5" stroke="#303030" stroke-width="1" stroke-dasharray="1 1"/><rect x="4.5" y="8.5" width="11.5" height="6.5" fill="#c8c8c8" stroke="#303840"/><rect x="5.5" y="9.5" width="9.5" height="1.5" fill="#f0f0f0"/></svg>
<svg style="left:325px;top:121px" width="17" height="17"><g fill="#000"><rect x="0" y="0" width="1" height="1"/><rect x="0" y="10" width="1" height="1"/><rect x="2" y="0" width="1" height="1"/><rect x="2" y="10" width="1" height="1"/><rect x="4" y="0" width="1" height="1"/><rect x="4" y="10" width="1" height="1"/><rect x="6" y="0" width="1" height="1"/><rect x="6" y="10" width="1" height="1"/><rect x="8" y="0" width="1" height="1"/><rect x="8" y="10" width="1" height="1"/><rect x="10" y="0" width="1" height="1"/><rect x="10" y="10" width="1" height="1"/><rect x="12" y="0" width="1" height="1"/><rect x="12" y="10" width="1" height="1"/><rect x="0" y="2" width="1" height="1"/><rect x="12" y="2" width="1" height="1"/><rect x="0" y="4" width="1" height="1"/><rect x="12" y="4" width="1" height="1"/><rect x="0" y="6" width="1" height="1"/><rect x="12" y="6" width="1" height="1"/><rect x="0" y="8" width="1" height="1"/><rect x="12" y="8" width="1" height="1"/></g><path d="M10.5,6.5L16,12L13,12.5L11,15.5Z" fill="#6a7888" stroke="#303a48" stroke-width="0.8"/></svg>
<svg style="left:354px;top:121px" width="17" height="16"><path d="M5.5,0.5h7l3,3l-3,3h-7z" fill="#a0e0f0" stroke="#4a98b0" stroke-width="0.9"/><path d="M6,7l-4.5,-4.5l-4.5,4.5h3v8h3v-8z" transform="translate(5,0)" fill="#f0b050" stroke="#a05810" stroke-width="0.9"/></svg>
<svg style="left:377px;top:121px" width="17" height="16"><path d="M6.5,9.5h7l3,3l-3,3h-7z" fill="#a0e0f0" stroke="#4a98b0" stroke-width="0.9"/><path d="M3.5,0.5h3v6h3l-4.5,5l-4.5,-5h3z" fill="#f0b050" stroke="#a05810" stroke-width="0.9"/></svg>
<svg style="left:400px;top:121px" width="17" height="16"><path d="M0.5,0.5h7l3,3l-3,3h-7z" fill="#a0e0f0" stroke="#4a98b0" stroke-width="0.9"/><path d="M3,7l3,8" stroke="#404040" stroke-dasharray="1 1"/><path d="M5.5,8.5h7l3,3l-3,3h-7z" fill="#c8c8c8" stroke="#606060" stroke-width="0.9"/></svg>
<div class="a" style="left:441px;top:122px;width:4px;height:9px;background:repeating-linear-gradient(#505050 0 1px,transparent 1px 2px)"></div>
<div class="a" style="left:431px;top:131px;width:14px;height:5px;background:repeating-linear-gradient(#404040 0 1px,transparent 1px 2px)"></div>
<svg style="left:429px;top:121px" width="13" height="11"><path d="M0.5,5l5,-4.5v2.5h5.5v4h-5.5v2.5z" fill="#a8d4f4" stroke="#1a5aa8" stroke-width="1"/></svg>
<div class="a" style="left:464px;top:122px;width:4px;height:9px;background:repeating-linear-gradient(#505050 0 1px,transparent 1px 2px)"></div>
<div class="a" style="left:454px;top:131px;width:14px;height:5px;background:repeating-linear-gradient(#404040 0 1px,transparent 1px 2px)"></div>
<svg style="left:452px;top:121px" width="13" height="11"><path d="M11.5,5l-5,-4.5v2.5h-5.5v4h5.5v2.5z" fill="#a8d4f4" stroke="#1a5aa8" stroke-width="1"/></svg>
<svg style="left:483px;top:123px" width="13" height="13"><circle cx="6" cy="6" r="5.5" fill="#f4a0a0" stroke="#c05050" stroke-width="0.9"/></svg>
<svg style="left:506px;top:123px" width="13" height="13"><rect x="0.5" y="0.5" width="11" height="11" fill="#c8c8c8" stroke="#606060"/><rect x="1.5" y="1.5" width="9" height="9" fill="#d8d8d8"/></svg>
<div class="a" style="left:544px;top:125px;width:4px;height:5px;background:repeating-linear-gradient(#505050 0 1px,transparent 1px 2px)"></div>
<div class="a" style="left:534px;top:131px;width:14px;height:5px;background:repeating-linear-gradient(#383838 0 1px,transparent 1px 2px)"></div>
<svg style="left:533px;top:121px" width="13" height="11"><path d="M2,9 Q2.5,1.5 5,1.5 Q7,1.5 6.5,5 Q6,8.5 8,8.5 Q10.5,8.5 10.5,1.5" fill="none" stroke="#1a9a1a" stroke-width="2.6" stroke-linecap="round"/><path d="M2,9 Q2.5,1.5 5,1.5 Q7,1.5 6.5,5 Q6,8.5 8,8.5 Q10.5,8.5 10.5,1.5" fill="none" stroke="#c8f0b8" stroke-width="0.8"/></svg>
<div class="a" style="left:567px;top:125px;width:4px;height:5px;background:repeating-linear-gradient(#1a1a1a 0 1px,transparent 1px 2px)"></div>
<div class="a" style="left:557px;top:131px;width:14px;height:5px;background:repeating-linear-gradient(#101010 0 1px,transparent 1px 2px)"></div>
<svg style="left:981px;top:123px" width="10" height="10"><rect x="0.5" y="0.5" width="9" height="9" fill="#fff" stroke="#888"/><path d="M4.5,1l1,1.5l-1,1.5l1,1.5l-1,1.5l1,1.5M1,4.5l1.5,1l1.5,-1l1.5,1l1.5,-1l1.5,1" fill="none" stroke="#000" stroke-width="1"/></svg>
<div class="a" style="left:280px;top:227px;width:287px;height:600px;border:1px solid #a0a0a0;background:#f2f2f2"></div>
<div class="t" style="left:320px;top:235.03px;font-size:12px;">Navigate</div>
<svg style="left:551px;top:236.5px" width="6" height="9"><path d="M0.8,0.8l3.7,3.7l-3.7,3.7" fill="none" stroke="#404040" stroke-width="1.2"/></svg>
<div class="t" style="left:320px;top:257.03px;font-size:12px;">Show Javadoc</div>
<div class="t" style="left:475px;top:257.03px;font-size:12px;">Alt+F1</div>
<div class="t" style="left:320px;top:279.03px;font-size:12px;">Find Usages</div>
<div class="t" style="left:475px;top:279.03px;font-size:12px;">Alt+F7</div>
<div class="t" style="left:320px;top:301.03px;font-size:12px;">Call Hierarchy</div>
<div class="a" style="left:315px;top:322px;width:249px;height:1px;background:#d0d0d0"></div>
<div class="t" style="left:320px;top:333.03px;font-size:12px;">Insert Code...</div>
<div class="t" style="left:475px;top:333.03px;font-size:12px;">Alt+Insert</div>
<div class="t" style="left:320px;top:355.03px;font-size:12px;">Fix Imports</div>
<div class="t" style="left:475px;top:355.03px;font-size:12px;">Ctrl+Shift+I</div>
<div class="t" style="left:320px;top:377.03px;font-size:12px;">Refactor</div>
<svg style="left:551px;top:378.5px" width="6" height="9"><path d="M0.8,0.8l3.7,3.7l-3.7,3.7" fill="none" stroke="#404040" stroke-width="1.2"/></svg>
<div class="t" style="left:320px;top:399.03px;font-size:12px;">Format</div>
<div class="t" style="left:475px;top:399.03px;font-size:12px;">Alt+Shift+F</div>
<div class="a" style="left:315px;top:420px;width:249px;height:1px;background:#d0d0d0"></div>
<div class="a" style="left:283px;top:426px;width:281px;height:22px;background:#91c9f7"></div>
<div class="t" style="left:320px;top:431.03px;font-size:12px;">Run File</div>
<div class="t" style="left:475px;top:431.03px;font-size:12px;">Shift+F6</div>
<div class="t" style="left:320px;top:453.03px;font-size:12px;">Debug File</div>
<div class="t" style="left:475px;top:453.03px;font-size:12px;">Ctrl+Shift+F5</div>
<div class="t" style="left:320px;top:475.03px;font-size:12px;">Test File</div>
<div class="t" style="left:475px;top:475.03px;font-size:12px;">Ctrl+F6</div>
<div class="t" style="left:320px;top:497.03px;font-size:12px;">Debug Test File</div>
<div class="t" style="left:475px;top:497.03px;font-size:12px;">Ctrl+Shift+F6</div>
<div class="t" style="left:320px;top:519.03px;font-size:12px;color:#6d6d6d;">Run Focused Test Method</div>
<div class="t" style="left:320px;top:541.03px;font-size:12px;color:#6d6d6d;">Debug Focused Test Method</div>
<div class="t" style="left:320px;top:563.03px;font-size:12px;color:#6d6d6d;">Run Into Method</div>
<div class="t" style="left:320px;top:585.03px;font-size:12px;">Run Maven</div>
<svg style="left:551px;top:586.5px" width="6" height="9"><path d="M0.8,0.8l3.7,3.7l-3.7,3.7" fill="none" stroke="#404040" stroke-width="1.2"/></svg>
<div class="t" style="left:320px;top:607.03px;font-size:12px;">New Watch...</div>
<div class="t" style="left:475px;top:607.03px;font-size:12px;">Ctrl+Shift+F7</div>
<div class="t" style="left:320px;top:629.03px;font-size:12px;">Toggle Line Breakpoint</div>
<div class="t" style="left:475px;top:629.03px;font-size:12px;">Ctrl+F8</div>
<div class="t" style="left:320px;top:651.03px;font-size:12px;">Profile</div>
<svg style="left:551px;top:652.5px" width="6" height="9"><path d="M0.8,0.8l3.7,3.7l-3.7,3.7" fill="none" stroke="#404040" stroke-width="1.2"/></svg>
<div class="a" style="left:315px;top:672px;width:249px;height:1px;background:#d0d0d0"></div>
<div class="t" style="left:320px;top:683.03px;font-size:12px;">Cut</div>
<div class="t" style="left:475px;top:683.03px;font-size:12px;">Ctrl+X</div>
<div class="t" style="left:320px;top:705.03px;font-size:12px;">Copy</div>
<div class="t" style="left:475px;top:705.03px;font-size:12px;">Ctrl+C</div>
<div class="t" style="left:320px;top:727.03px;font-size:12px;">Paste</div>
<div class="t" style="left:475px;top:727.03px;font-size:12px;">Ctrl+V</div>
<div class="a" style="left:315px;top:748px;width:249px;height:1px;background:#d0d0d0"></div>
<div class="t" style="left:320px;top:759.03px;font-size:12px;">Code Folds</div>
<svg style="left:551px;top:760.5px" width="6" height="9"><path d="M0.8,0.8l3.7,3.7l-3.7,3.7" fill="none" stroke="#404040" stroke-width="1.2"/></svg>
</body></html>
